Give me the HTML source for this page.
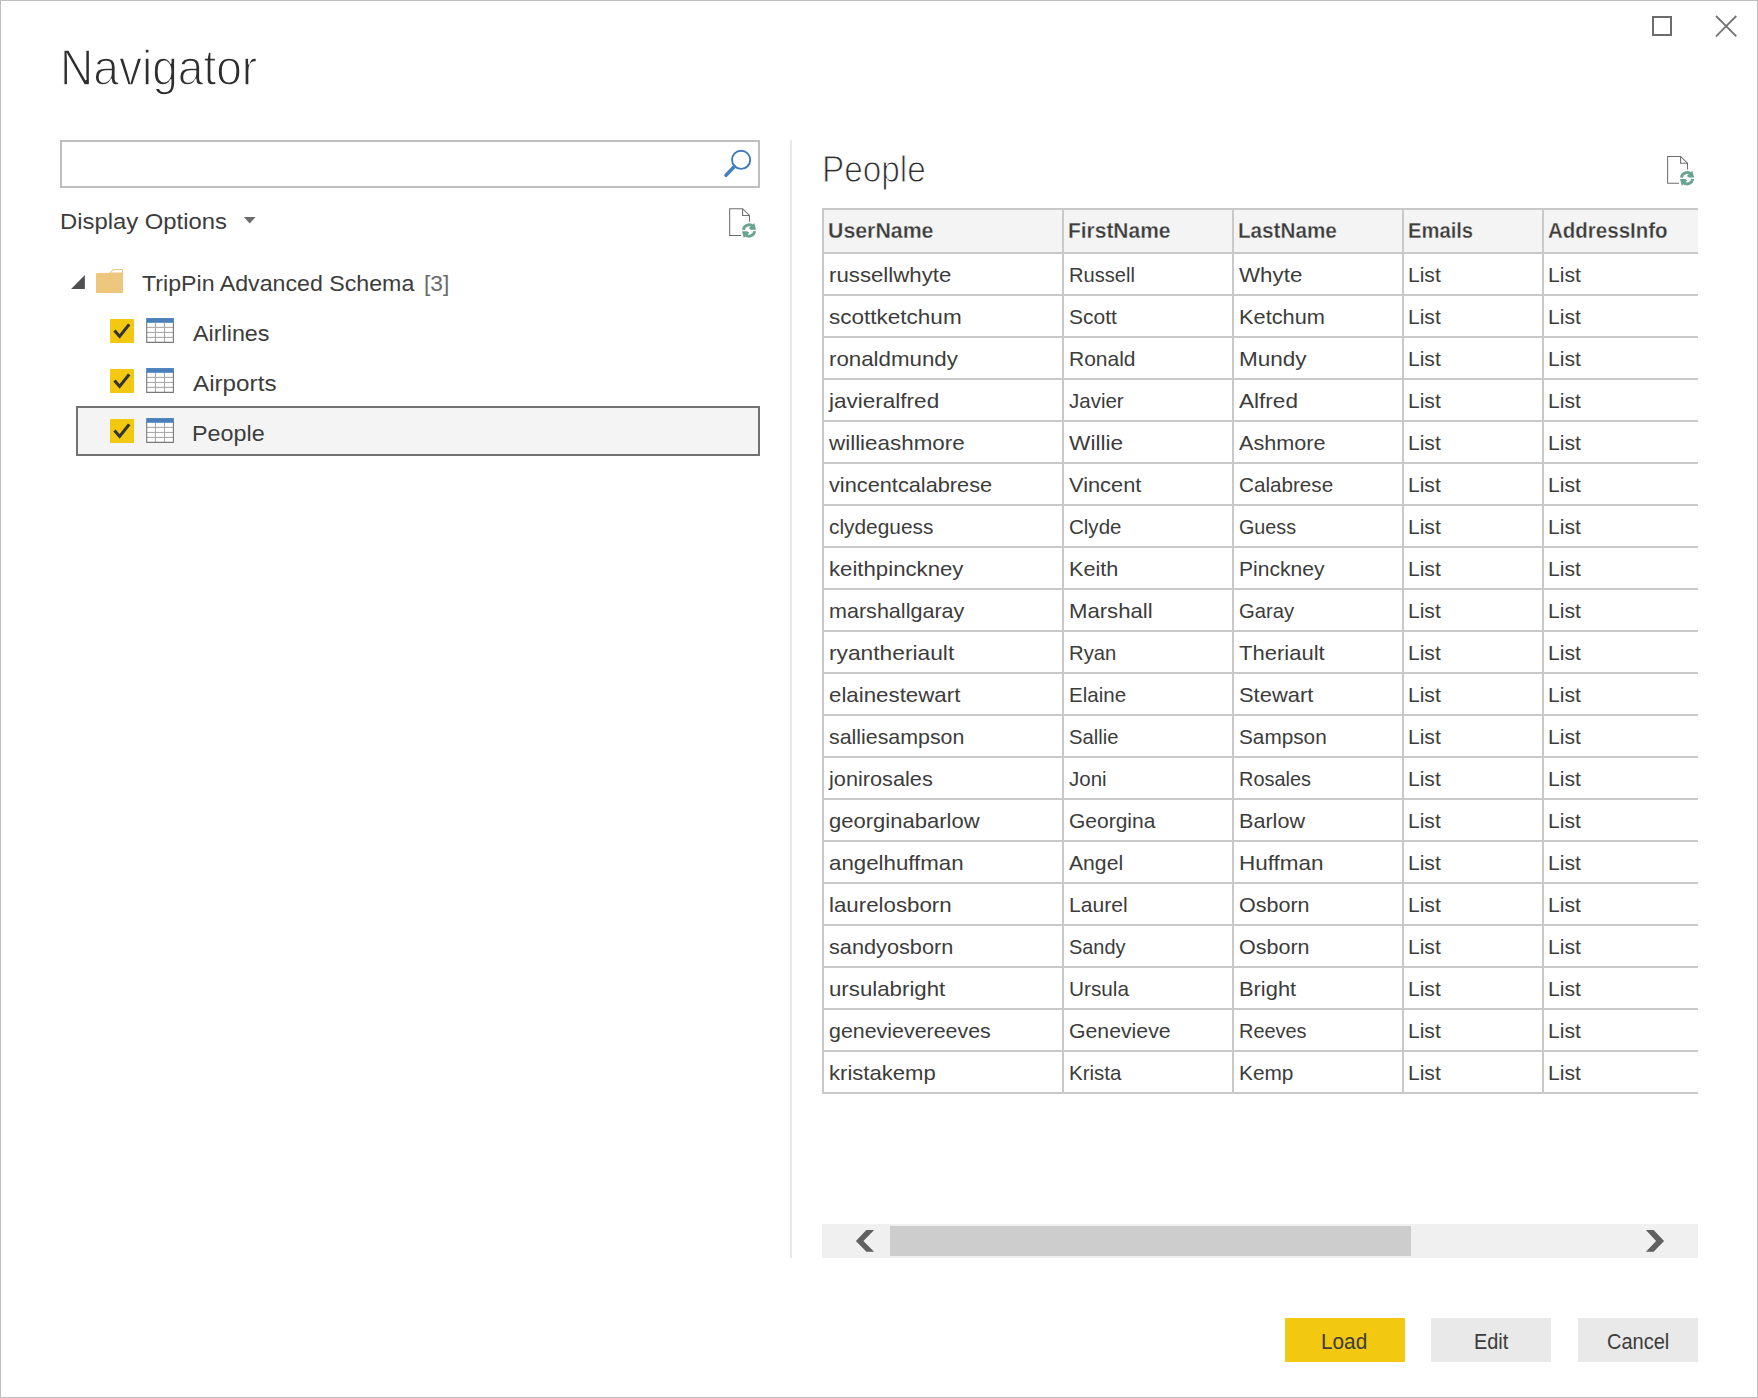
<!DOCTYPE html>
<html><head><meta charset="utf-8"><title>Navigator</title><style>
html,body{margin:0;padding:0;background:#fff;}
body{width:1758px;height:1398px;position:relative;overflow:hidden;font-family:"Liberation Sans",sans-serif;}
.t{position:absolute;white-space:pre;transform-origin:0 50%;display:block;}
.a{position:absolute;}
</style></head><body>
<div class="a" style="left:0;top:0;width:1756px;height:1396px;border:1px solid #bebebe;"></div>
<div class="a" style="left:60px;top:140px;width:696px;height:44px;border:2px solid #bfbfbf;background:#fff;"></div>
<div class="a" style="left:790px;top:140px;width:2px;height:1118px;background:#e8e8e8;"></div>
<div class="a" style="left:76px;top:406px;width:680px;height:46px;border:2px solid #727272;background:#f4f4f4;"></div>
<div class="a" style="left:822px;top:208px;width:876px;height:46px;background:#f4f4f4;"></div>
<div class="a" style="left:822px;top:208px;width:876px;height:2px;background:#c9c9c9;"></div>
<div class="a" style="left:822px;top:252px;width:876px;height:2px;background:#c9c9c9;"></div>
<div class="a" style="left:822px;top:294px;width:876px;height:2px;background:#c9c9c9;"></div>
<div class="a" style="left:822px;top:336px;width:876px;height:2px;background:#c9c9c9;"></div>
<div class="a" style="left:822px;top:378px;width:876px;height:2px;background:#c9c9c9;"></div>
<div class="a" style="left:822px;top:420px;width:876px;height:2px;background:#c9c9c9;"></div>
<div class="a" style="left:822px;top:462px;width:876px;height:2px;background:#c9c9c9;"></div>
<div class="a" style="left:822px;top:504px;width:876px;height:2px;background:#c9c9c9;"></div>
<div class="a" style="left:822px;top:546px;width:876px;height:2px;background:#c9c9c9;"></div>
<div class="a" style="left:822px;top:588px;width:876px;height:2px;background:#c9c9c9;"></div>
<div class="a" style="left:822px;top:630px;width:876px;height:2px;background:#c9c9c9;"></div>
<div class="a" style="left:822px;top:672px;width:876px;height:2px;background:#c9c9c9;"></div>
<div class="a" style="left:822px;top:714px;width:876px;height:2px;background:#c9c9c9;"></div>
<div class="a" style="left:822px;top:756px;width:876px;height:2px;background:#c9c9c9;"></div>
<div class="a" style="left:822px;top:798px;width:876px;height:2px;background:#c9c9c9;"></div>
<div class="a" style="left:822px;top:840px;width:876px;height:2px;background:#c9c9c9;"></div>
<div class="a" style="left:822px;top:882px;width:876px;height:2px;background:#c9c9c9;"></div>
<div class="a" style="left:822px;top:924px;width:876px;height:2px;background:#c9c9c9;"></div>
<div class="a" style="left:822px;top:966px;width:876px;height:2px;background:#c9c9c9;"></div>
<div class="a" style="left:822px;top:1008px;width:876px;height:2px;background:#c9c9c9;"></div>
<div class="a" style="left:822px;top:1050px;width:876px;height:2px;background:#c9c9c9;"></div>
<div class="a" style="left:822px;top:1092px;width:876px;height:2px;background:#c9c9c9;"></div>
<div class="a" style="left:822px;top:208px;width:2px;height:886px;background:#c9c9c9;"></div>
<div class="a" style="left:1062px;top:208px;width:2px;height:886px;background:#c9c9c9;"></div>
<div class="a" style="left:1232px;top:208px;width:2px;height:886px;background:#c9c9c9;"></div>
<div class="a" style="left:1402px;top:208px;width:2px;height:886px;background:#c9c9c9;"></div>
<div class="a" style="left:1542px;top:208px;width:2px;height:886px;background:#c9c9c9;"></div>
<div class="a" style="left:822px;top:1224px;width:876px;height:34px;background:#f0f0f0;"></div>
<div class="a" style="left:890px;top:1226px;width:521px;height:30px;background:#cdcdcd;"></div>
<div class="a" style="left:1285px;top:1318px;width:120px;height:44px;background:#f2c811;"></div>
<div class="a" style="left:1431px;top:1318px;width:120px;height:44px;background:#e9e9e9;"></div>
<div class="a" style="left:1578px;top:1318px;width:120px;height:44px;background:#e9e9e9;"></div>
<svg class="a" style="left:0;top:0" width="1758" height="1398" viewBox="0 0 1758 1398">
<rect x="1653" y="17" width="18" height="18" fill="none" stroke="#6c6c6c" stroke-width="2"/>
<path d="M1716 16 L1736.3 36.3 M1736.3 16 L1716 36.3" stroke="#747474" stroke-width="1.8" fill="none"/>
<circle cx="741.1" cy="159.8" r="9.1" fill="none" stroke="#3f7ab8" stroke-width="1.9"/>
<path d="M734.4 166.6 L726.0 175.2" stroke="#4680bc" stroke-width="3.6" stroke-linecap="round" fill="none"/>
<polygon points="243.8,217 255.6,217 249.7,223.4" fill="#6e6e6e"/>
<g transform="translate(0,0)"><path d="M741 235.5 H729.65 V208.65 H742.6 L749.5 215.5 V221.8 M742.6 208.65 V215.5 H749.5" fill="none" stroke="#6e6e6e" stroke-width="1.05" stroke-linejoin="miter"/><path d="M743.45 229.85 A5.6 5.6 0 0 1 753.2 226.7" fill="none" stroke="#68a48f" stroke-width="2.8"/><polygon points="754.3,223.0 756.1,229.8 750.7,229.8 748.9,228.2" fill="#68a48f"/><path d="M754.65 231.15 A5.6 5.6 0 0 1 744.9 234.3" fill="none" stroke="#68a48f" stroke-width="2.8"/><polygon points="743.8,238.0 742.0,231.2 747.4,231.2 749.2,232.8" fill="#68a48f"/></g>
<g transform="translate(938,-52.25)"><path d="M741 235.5 H729.65 V208.65 H742.6 L749.5 215.5 V221.8 M742.6 208.65 V215.5 H749.5" fill="none" stroke="#6e6e6e" stroke-width="1.05" stroke-linejoin="miter"/><path d="M743.45 229.85 A5.6 5.6 0 0 1 753.2 226.7" fill="none" stroke="#68a48f" stroke-width="2.8"/><polygon points="754.3,223.0 756.1,229.8 750.7,229.8 748.9,228.2" fill="#68a48f"/><path d="M754.65 231.15 A5.6 5.6 0 0 1 744.9 234.3" fill="none" stroke="#68a48f" stroke-width="2.8"/><polygon points="743.8,238.0 742.0,231.2 747.4,231.2 749.2,232.8" fill="#68a48f"/></g>
<polygon points="71.1,288.9 84.9,288.9 84.9,274.9" fill="#505050"/>
<path d="M96 273.9 Q96 272.9 97 272.9 H109.1 L113.3 268.9 H121.5 Q123 268.9 123 270.4 V292.9 H96 Z" fill="#ecc77d"/>
<path d="M110.9 272.6 L113.9 269.9 H121.2 Q122.0 269.9 122.0 270.8 V272.6 Z" fill="#fff"/>
<g transform="translate(0,0)"><rect x="110" y="319" width="24" height="24" fill="#f2c811"/><path d="M114.5 330.5 L119.6 336.4 L129.2 324.4" fill="none" stroke="#333" stroke-width="3.1" stroke-linejoin="miter"/><rect x="146.2" y="318" width="27.7" height="24.9" fill="#fff"/><rect x="154.89999999999998" y="322.8" width="1.1" height="19.5" fill="#a9a9a9"/><rect x="163.95" y="322.8" width="1.1" height="19.5" fill="#a9a9a9"/><rect x="146.7" y="326.84999999999997" width="26.7" height="1.1" fill="#a9a9a9"/><rect x="146.7" y="331.9" width="26.7" height="1.1" fill="#a9a9a9"/><rect x="146.7" y="336.84999999999997" width="26.7" height="1.1" fill="#a9a9a9"/><path d="M146.7 322 V342.35 H173.4 V322" fill="none" stroke="#787878" stroke-width="1.1"/><rect x="146.15" y="318.05" width="27.75" height="4.75" fill="#4a80ba"/></g>
<g transform="translate(0,50)"><rect x="110" y="319" width="24" height="24" fill="#f2c811"/><path d="M114.5 330.5 L119.6 336.4 L129.2 324.4" fill="none" stroke="#333" stroke-width="3.1" stroke-linejoin="miter"/><rect x="146.2" y="318" width="27.7" height="24.9" fill="#fff"/><rect x="154.89999999999998" y="322.8" width="1.1" height="19.5" fill="#a9a9a9"/><rect x="163.95" y="322.8" width="1.1" height="19.5" fill="#a9a9a9"/><rect x="146.7" y="326.84999999999997" width="26.7" height="1.1" fill="#a9a9a9"/><rect x="146.7" y="331.9" width="26.7" height="1.1" fill="#a9a9a9"/><rect x="146.7" y="336.84999999999997" width="26.7" height="1.1" fill="#a9a9a9"/><path d="M146.7 322 V342.35 H173.4 V322" fill="none" stroke="#787878" stroke-width="1.1"/><rect x="146.15" y="318.05" width="27.75" height="4.75" fill="#4a80ba"/></g>
<g transform="translate(0,100)"><rect x="110" y="319" width="24" height="24" fill="#f2c811"/><path d="M114.5 330.5 L119.6 336.4 L129.2 324.4" fill="none" stroke="#333" stroke-width="3.1" stroke-linejoin="miter"/><rect x="146.2" y="318" width="27.7" height="24.9" fill="#fff"/><rect x="154.89999999999998" y="322.8" width="1.1" height="19.5" fill="#a9a9a9"/><rect x="163.95" y="322.8" width="1.1" height="19.5" fill="#a9a9a9"/><rect x="146.7" y="326.84999999999997" width="26.7" height="1.1" fill="#a9a9a9"/><rect x="146.7" y="331.9" width="26.7" height="1.1" fill="#a9a9a9"/><rect x="146.7" y="336.84999999999997" width="26.7" height="1.1" fill="#a9a9a9"/><path d="M146.7 322 V342.35 H173.4 V322" fill="none" stroke="#787878" stroke-width="1.1"/><rect x="146.15" y="318.05" width="27.75" height="4.75" fill="#4a80ba"/></g>
<polygon points="874.1,1230.07 866.4,1230.07 855.9,1240.9 866.4,1251.85 874.1,1251.85 863.4,1240.9" fill="#606060"/>
<polygon points="1645.9,1230.07 1653.6,1230.07 1664.1,1240.9 1653.6,1251.85 1645.9,1251.85 1656.1,1240.9" fill="#606060"/>
</svg>
<span class="t" id="t0" style="left:60.22px;top:31.70px;font-size:50.6px;line-height:71px;color:#2e2e2e;-webkit-text-stroke:1.4px #fff;transform:scaleX(0.9108);">Navigator</span>
<span class="t" id="t1" style="left:60.45px;top:206.30px;font-size:22.6px;line-height:32px;color:#3c3c3c;transform:scaleX(1.0549);">Display Options</span>
<span class="t" id="t2" style="left:142.49px;top:267.90px;font-size:22.6px;line-height:32px;color:#3c3c3c;transform:scaleX(1.0260);">TripPin Advanced Schema</span>
<span class="t" id="t3" style="left:423.69px;top:267.90px;font-size:22.6px;line-height:32px;color:#6a6a6a;transform:scaleX(1.0069);">[3]</span>
<span class="t" id="t4" style="left:193.00px;top:318.00px;font-size:22.6px;line-height:32px;color:#3c3c3c;transform:scaleX(1.0328);">Airlines</span>
<span class="t" id="t5" style="left:192.95px;top:368.00px;font-size:22.6px;line-height:32px;color:#3c3c3c;transform:scaleX(1.0727);">Airports</span>
<span class="t" id="t6" style="left:192.44px;top:418.00px;font-size:22.6px;line-height:32px;color:#3c3c3c;transform:scaleX(1.0325);">People</span>
<span class="t" id="t7" style="left:822.16px;top:144.50px;font-size:36.0px;line-height:50px;color:#2e2e2e;-webkit-text-stroke:1.0px #fff;transform:scaleX(0.9254);">People</span>
<span class="t" id="t8" style="left:828.04px;top:215.80px;font-size:21.2px;line-height:30px;color:#3c3c3c;font-weight:700;-webkit-text-stroke:0.28px #f4f4f4;transform:scaleX(1.0058);">UserName</span>
<span class="t" id="t9" style="left:1068.32px;top:215.80px;font-size:21.2px;line-height:30px;color:#3c3c3c;font-weight:700;-webkit-text-stroke:0.28px #f4f4f4;transform:scaleX(0.9881);">FirstName</span>
<span class="t" id="t10" style="left:1237.94px;top:215.80px;font-size:21.2px;line-height:30px;color:#3c3c3c;font-weight:700;-webkit-text-stroke:0.28px #f4f4f4;transform:scaleX(0.9753);">LastName</span>
<span class="t" id="t11" style="left:1408.07px;top:215.80px;font-size:21.2px;line-height:30px;color:#3c3c3c;font-weight:700;-webkit-text-stroke:0.28px #f4f4f4;transform:scaleX(0.9529);">Emails</span>
<span class="t" id="t12" style="left:1548.47px;top:215.80px;font-size:21.2px;line-height:30px;color:#3c3c3c;font-weight:700;-webkit-text-stroke:0.28px #f4f4f4;transform:scaleX(0.9676);">AddressInfo</span>
<span class="t" id="t13" style="left:828.69px;top:261.10px;font-size:20.4px;line-height:29px;color:#3c3c3c;transform:scaleX(1.0900);">russellwhyte</span>
<span class="t" id="t14" style="left:1068.72px;top:261.10px;font-size:20.4px;line-height:29px;color:#3c3c3c;transform:scaleX(0.9867);">Russell</span>
<span class="t" id="t15" style="left:1238.70px;top:261.10px;font-size:20.4px;line-height:29px;color:#3c3c3c;transform:scaleX(1.0961);">Whyte</span>
<span class="t" id="t16" style="left:1407.85px;top:261.10px;font-size:20.4px;line-height:29px;color:#3c3c3c;transform:scaleX(1.0315);">List</span>
<span class="t" id="t17" style="left:1547.84px;top:261.10px;font-size:20.4px;line-height:29px;color:#3c3c3c;transform:scaleX(1.0348);">List</span>
<span class="t" id="t18" style="left:828.75px;top:303.10px;font-size:20.4px;line-height:29px;color:#3c3c3c;transform:scaleX(1.1042);">scottketchum</span>
<span class="t" id="t19" style="left:1068.68px;top:303.10px;font-size:20.4px;line-height:29px;color:#3c3c3c;transform:scaleX(1.0296);">Scott</span>
<span class="t" id="t20" style="left:1238.60px;top:303.10px;font-size:20.4px;line-height:29px;color:#3c3c3c;transform:scaleX(1.0688);">Ketchum</span>
<span class="t" id="t21" style="left:1407.85px;top:303.10px;font-size:20.4px;line-height:29px;color:#3c3c3c;transform:scaleX(1.0315);">List</span>
<span class="t" id="t22" style="left:1547.84px;top:303.10px;font-size:20.4px;line-height:29px;color:#3c3c3c;transform:scaleX(1.0348);">List</span>
<span class="t" id="t23" style="left:828.69px;top:345.10px;font-size:20.4px;line-height:29px;color:#3c3c3c;transform:scaleX(1.0934);">ronaldmundy</span>
<span class="t" id="t24" style="left:1068.66px;top:345.10px;font-size:20.4px;line-height:29px;color:#3c3c3c;transform:scaleX(1.0291);">Ronald</span>
<span class="t" id="t25" style="left:1238.54px;top:345.10px;font-size:20.4px;line-height:29px;color:#3c3c3c;transform:scaleX(1.1051);">Mundy</span>
<span class="t" id="t26" style="left:1407.85px;top:345.10px;font-size:20.4px;line-height:29px;color:#3c3c3c;transform:scaleX(1.0315);">List</span>
<span class="t" id="t27" style="left:1547.84px;top:345.10px;font-size:20.4px;line-height:29px;color:#3c3c3c;transform:scaleX(1.0348);">List</span>
<span class="t" id="t28" style="left:828.86px;top:387.10px;font-size:20.4px;line-height:29px;color:#3c3c3c;transform:scaleX(1.1045);">javieralfred</span>
<span class="t" id="t29" style="left:1068.70px;top:387.10px;font-size:20.4px;line-height:29px;color:#3c3c3c;transform:scaleX(1.0047);">Javier</span>
<span class="t" id="t30" style="left:1238.70px;top:387.10px;font-size:20.4px;line-height:29px;color:#3c3c3c;transform:scaleX(1.1067);">Alfred</span>
<span class="t" id="t31" style="left:1407.85px;top:387.10px;font-size:20.4px;line-height:29px;color:#3c3c3c;transform:scaleX(1.0315);">List</span>
<span class="t" id="t32" style="left:1547.84px;top:387.10px;font-size:20.4px;line-height:29px;color:#3c3c3c;transform:scaleX(1.0348);">List</span>
<span class="t" id="t33" style="left:828.81px;top:429.10px;font-size:20.4px;line-height:29px;color:#3c3c3c;transform:scaleX(1.0990);">willieashmore</span>
<span class="t" id="t34" style="left:1068.70px;top:429.10px;font-size:20.4px;line-height:29px;color:#3c3c3c;transform:scaleX(1.1110);">Willie</span>
<span class="t" id="t35" style="left:1238.70px;top:429.10px;font-size:20.4px;line-height:29px;color:#3c3c3c;transform:scaleX(1.0594);">Ashmore</span>
<span class="t" id="t36" style="left:1407.85px;top:429.10px;font-size:20.4px;line-height:29px;color:#3c3c3c;transform:scaleX(1.0315);">List</span>
<span class="t" id="t37" style="left:1547.84px;top:429.10px;font-size:20.4px;line-height:29px;color:#3c3c3c;transform:scaleX(1.0348);">List</span>
<span class="t" id="t38" style="left:828.80px;top:471.10px;font-size:20.4px;line-height:29px;color:#3c3c3c;transform:scaleX(1.0663);">vincentcalabrese</span>
<span class="t" id="t39" style="left:1068.70px;top:471.10px;font-size:20.4px;line-height:29px;color:#3c3c3c;transform:scaleX(1.0689);">Vincent</span>
<span class="t" id="t40" style="left:1238.69px;top:471.10px;font-size:20.4px;line-height:29px;color:#3c3c3c;transform:scaleX(1.0132);">Calabrese</span>
<span class="t" id="t41" style="left:1407.85px;top:471.10px;font-size:20.4px;line-height:29px;color:#3c3c3c;transform:scaleX(1.0315);">List</span>
<span class="t" id="t42" style="left:1547.84px;top:471.10px;font-size:20.4px;line-height:29px;color:#3c3c3c;transform:scaleX(1.0348);">List</span>
<span class="t" id="t43" style="left:828.78px;top:513.10px;font-size:20.4px;line-height:29px;color:#3c3c3c;transform:scaleX(1.0228);">clydeguess</span>
<span class="t" id="t44" style="left:1068.70px;top:513.10px;font-size:20.4px;line-height:29px;color:#3c3c3c;transform:scaleX(1.0060);">Clyde</span>
<span class="t" id="t45" style="left:1238.73px;top:513.10px;font-size:20.4px;line-height:29px;color:#3c3c3c;transform:scaleX(0.9686);">Guess</span>
<span class="t" id="t46" style="left:1407.85px;top:513.10px;font-size:20.4px;line-height:29px;color:#3c3c3c;transform:scaleX(1.0315);">List</span>
<span class="t" id="t47" style="left:1547.84px;top:513.10px;font-size:20.4px;line-height:29px;color:#3c3c3c;transform:scaleX(1.0348);">List</span>
<span class="t" id="t48" style="left:828.67px;top:555.10px;font-size:20.4px;line-height:29px;color:#3c3c3c;transform:scaleX(1.0881);">keithpinckney</span>
<span class="t" id="t49" style="left:1068.61px;top:555.10px;font-size:20.4px;line-height:29px;color:#3c3c3c;transform:scaleX(1.0628);">Keith</span>
<span class="t" id="t50" style="left:1238.65px;top:555.10px;font-size:20.4px;line-height:29px;color:#3c3c3c;transform:scaleX(1.0326);">Pinckney</span>
<span class="t" id="t51" style="left:1407.85px;top:555.10px;font-size:20.4px;line-height:29px;color:#3c3c3c;transform:scaleX(1.0315);">List</span>
<span class="t" id="t52" style="left:1547.84px;top:555.10px;font-size:20.4px;line-height:29px;color:#3c3c3c;transform:scaleX(1.0348);">List</span>
<span class="t" id="t53" style="left:828.73px;top:597.10px;font-size:20.4px;line-height:29px;color:#3c3c3c;transform:scaleX(1.0568);">marshallgaray</span>
<span class="t" id="t54" style="left:1068.57px;top:597.10px;font-size:20.4px;line-height:29px;color:#3c3c3c;transform:scaleX(1.0855);">Marshall</span>
<span class="t" id="t55" style="left:1238.71px;top:597.10px;font-size:20.4px;line-height:29px;color:#3c3c3c;transform:scaleX(0.9927);">Garay</span>
<span class="t" id="t56" style="left:1407.85px;top:597.10px;font-size:20.4px;line-height:29px;color:#3c3c3c;transform:scaleX(1.0315);">List</span>
<span class="t" id="t57" style="left:1547.84px;top:597.10px;font-size:20.4px;line-height:29px;color:#3c3c3c;transform:scaleX(1.0348);">List</span>
<span class="t" id="t58" style="left:828.66px;top:639.10px;font-size:20.4px;line-height:29px;color:#3c3c3c;transform:scaleX(1.1158);">ryantheriault</span>
<span class="t" id="t59" style="left:1068.71px;top:639.10px;font-size:20.4px;line-height:29px;color:#3c3c3c;transform:scaleX(0.9933);">Ryan</span>
<span class="t" id="t60" style="left:1238.68px;top:639.10px;font-size:20.4px;line-height:29px;color:#3c3c3c;transform:scaleX(1.0797);">Theriault</span>
<span class="t" id="t61" style="left:1407.85px;top:639.10px;font-size:20.4px;line-height:29px;color:#3c3c3c;transform:scaleX(1.0315);">List</span>
<span class="t" id="t62" style="left:1547.84px;top:639.10px;font-size:20.4px;line-height:29px;color:#3c3c3c;transform:scaleX(1.0348);">List</span>
<span class="t" id="t63" style="left:828.74px;top:681.10px;font-size:20.4px;line-height:29px;color:#3c3c3c;transform:scaleX(1.0931);">elainestewart</span>
<span class="t" id="t64" style="left:1068.69px;top:681.10px;font-size:20.4px;line-height:29px;color:#3c3c3c;transform:scaleX(1.0083);">Elaine</span>
<span class="t" id="t65" style="left:1238.64px;top:681.10px;font-size:20.4px;line-height:29px;color:#3c3c3c;transform:scaleX(1.0747);">Stewart</span>
<span class="t" id="t66" style="left:1407.85px;top:681.10px;font-size:20.4px;line-height:29px;color:#3c3c3c;transform:scaleX(1.0315);">List</span>
<span class="t" id="t67" style="left:1547.84px;top:681.10px;font-size:20.4px;line-height:29px;color:#3c3c3c;transform:scaleX(1.0348);">List</span>
<span class="t" id="t68" style="left:828.78px;top:723.10px;font-size:20.4px;line-height:29px;color:#3c3c3c;transform:scaleX(1.0478);">salliesampson</span>
<span class="t" id="t69" style="left:1068.71px;top:723.10px;font-size:20.4px;line-height:29px;color:#3c3c3c;transform:scaleX(0.9907);">Sallie</span>
<span class="t" id="t70" style="left:1238.69px;top:723.10px;font-size:20.4px;line-height:29px;color:#3c3c3c;transform:scaleX(1.0179);">Sampson</span>
<span class="t" id="t71" style="left:1407.85px;top:723.10px;font-size:20.4px;line-height:29px;color:#3c3c3c;transform:scaleX(1.0315);">List</span>
<span class="t" id="t72" style="left:1547.84px;top:723.10px;font-size:20.4px;line-height:29px;color:#3c3c3c;transform:scaleX(1.0348);">List</span>
<span class="t" id="t73" style="left:828.84px;top:765.10px;font-size:20.4px;line-height:29px;color:#3c3c3c;transform:scaleX(1.0643);">jonirosales</span>
<span class="t" id="t74" style="left:1068.70px;top:765.10px;font-size:20.4px;line-height:29px;color:#3c3c3c;transform:scaleX(1.0043);">Joni</span>
<span class="t" id="t75" style="left:1238.74px;top:765.10px;font-size:20.4px;line-height:29px;color:#3c3c3c;transform:scaleX(0.9769);">Rosales</span>
<span class="t" id="t76" style="left:1407.85px;top:765.10px;font-size:20.4px;line-height:29px;color:#3c3c3c;transform:scaleX(1.0315);">List</span>
<span class="t" id="t77" style="left:1547.84px;top:765.10px;font-size:20.4px;line-height:29px;color:#3c3c3c;transform:scaleX(1.0348);">List</span>
<span class="t" id="t78" style="left:828.74px;top:807.10px;font-size:20.4px;line-height:29px;color:#3c3c3c;transform:scaleX(1.0804);">georginabarlow</span>
<span class="t" id="t79" style="left:1068.67px;top:807.10px;font-size:20.4px;line-height:29px;color:#3c3c3c;transform:scaleX(1.0295);">Georgina</span>
<span class="t" id="t80" style="left:1238.61px;top:807.10px;font-size:20.4px;line-height:29px;color:#3c3c3c;transform:scaleX(1.0584);">Barlow</span>
<span class="t" id="t81" style="left:1407.85px;top:807.10px;font-size:20.4px;line-height:29px;color:#3c3c3c;transform:scaleX(1.0315);">List</span>
<span class="t" id="t82" style="left:1547.84px;top:807.10px;font-size:20.4px;line-height:29px;color:#3c3c3c;transform:scaleX(1.0348);">List</span>
<span class="t" id="t83" style="left:828.71px;top:849.10px;font-size:20.4px;line-height:29px;color:#3c3c3c;transform:scaleX(1.0922);">angelhuffman</span>
<span class="t" id="t84" style="left:1068.70px;top:849.10px;font-size:20.4px;line-height:29px;color:#3c3c3c;transform:scaleX(1.0374);">Angel</span>
<span class="t" id="t85" style="left:1238.54px;top:849.10px;font-size:20.4px;line-height:29px;color:#3c3c3c;transform:scaleX(1.1027);">Huffman</span>
<span class="t" id="t86" style="left:1407.85px;top:849.10px;font-size:20.4px;line-height:29px;color:#3c3c3c;transform:scaleX(1.0315);">List</span>
<span class="t" id="t87" style="left:1547.84px;top:849.10px;font-size:20.4px;line-height:29px;color:#3c3c3c;transform:scaleX(1.0348);">List</span>
<span class="t" id="t88" style="left:828.67px;top:891.10px;font-size:20.4px;line-height:29px;color:#3c3c3c;transform:scaleX(1.0927);">laurelosborn</span>
<span class="t" id="t89" style="left:1068.65px;top:891.10px;font-size:20.4px;line-height:29px;color:#3c3c3c;transform:scaleX(1.0353);">Laurel</span>
<span class="t" id="t90" style="left:1238.66px;top:891.10px;font-size:20.4px;line-height:29px;color:#3c3c3c;transform:scaleX(1.0548);">Osborn</span>
<span class="t" id="t91" style="left:1407.85px;top:891.10px;font-size:20.4px;line-height:29px;color:#3c3c3c;transform:scaleX(1.0315);">List</span>
<span class="t" id="t92" style="left:1547.84px;top:891.10px;font-size:20.4px;line-height:29px;color:#3c3c3c;transform:scaleX(1.0348);">List</span>
<span class="t" id="t93" style="left:828.77px;top:933.10px;font-size:20.4px;line-height:29px;color:#3c3c3c;transform:scaleX(1.0643);">sandyosborn</span>
<span class="t" id="t94" style="left:1068.72px;top:933.10px;font-size:20.4px;line-height:29px;color:#3c3c3c;transform:scaleX(0.9772);">Sandy</span>
<span class="t" id="t95" style="left:1238.66px;top:933.10px;font-size:20.4px;line-height:29px;color:#3c3c3c;transform:scaleX(1.0548);">Osborn</span>
<span class="t" id="t96" style="left:1407.85px;top:933.10px;font-size:20.4px;line-height:29px;color:#3c3c3c;transform:scaleX(1.0315);">List</span>
<span class="t" id="t97" style="left:1547.84px;top:933.10px;font-size:20.4px;line-height:29px;color:#3c3c3c;transform:scaleX(1.0348);">List</span>
<span class="t" id="t98" style="left:828.69px;top:975.10px;font-size:20.4px;line-height:29px;color:#3c3c3c;transform:scaleX(1.0912);">ursulabright</span>
<span class="t" id="t99" style="left:1068.67px;top:975.10px;font-size:20.4px;line-height:29px;color:#3c3c3c;transform:scaleX(1.0174);">Ursula</span>
<span class="t" id="t100" style="left:1238.59px;top:975.10px;font-size:20.4px;line-height:29px;color:#3c3c3c;transform:scaleX(1.0724);">Bright</span>
<span class="t" id="t101" style="left:1407.85px;top:975.10px;font-size:20.4px;line-height:29px;color:#3c3c3c;transform:scaleX(1.0315);">List</span>
<span class="t" id="t102" style="left:1547.84px;top:975.10px;font-size:20.4px;line-height:29px;color:#3c3c3c;transform:scaleX(1.0348);">List</span>
<span class="t" id="t103" style="left:828.77px;top:1017.10px;font-size:20.4px;line-height:29px;color:#3c3c3c;transform:scaleX(1.0491);">genevievereeves</span>
<span class="t" id="t104" style="left:1068.66px;top:1017.10px;font-size:20.4px;line-height:29px;color:#3c3c3c;transform:scaleX(1.0424);">Genevieve</span>
<span class="t" id="t105" style="left:1238.74px;top:1017.10px;font-size:20.4px;line-height:29px;color:#3c3c3c;transform:scaleX(0.9776);">Reeves</span>
<span class="t" id="t106" style="left:1407.85px;top:1017.10px;font-size:20.4px;line-height:29px;color:#3c3c3c;transform:scaleX(1.0315);">List</span>
<span class="t" id="t107" style="left:1547.84px;top:1017.10px;font-size:20.4px;line-height:29px;color:#3c3c3c;transform:scaleX(1.0348);">List</span>
<span class="t" id="t108" style="left:828.68px;top:1059.10px;font-size:20.4px;line-height:29px;color:#3c3c3c;transform:scaleX(1.0831);">kristakemp</span>
<span class="t" id="t109" style="left:1068.69px;top:1059.10px;font-size:20.4px;line-height:29px;color:#3c3c3c;transform:scaleX(1.0049);">Krista</span>
<span class="t" id="t110" style="left:1238.67px;top:1059.10px;font-size:20.4px;line-height:29px;color:#3c3c3c;transform:scaleX(1.0215);">Kemp</span>
<span class="t" id="t111" style="left:1407.85px;top:1059.10px;font-size:20.4px;line-height:29px;color:#3c3c3c;transform:scaleX(1.0315);">List</span>
<span class="t" id="t112" style="left:1547.84px;top:1059.10px;font-size:20.4px;line-height:29px;color:#3c3c3c;transform:scaleX(1.0348);">List</span>
<span class="t" id="t113" style="left:1321.39px;top:1326.50px;font-size:21.2px;line-height:30px;color:#3c3c3c;transform:scaleX(0.9795);">Load</span>
<span class="t" id="t114" style="left:1473.86px;top:1326.50px;font-size:21.2px;line-height:30px;color:#3c3c3c;transform:scaleX(0.9396);">Edit</span>
<span class="t" id="t115" style="left:1607.36px;top:1326.50px;font-size:21.2px;line-height:30px;color:#3c3c3c;transform:scaleX(0.9449);">Cancel</span>
</body></html>
